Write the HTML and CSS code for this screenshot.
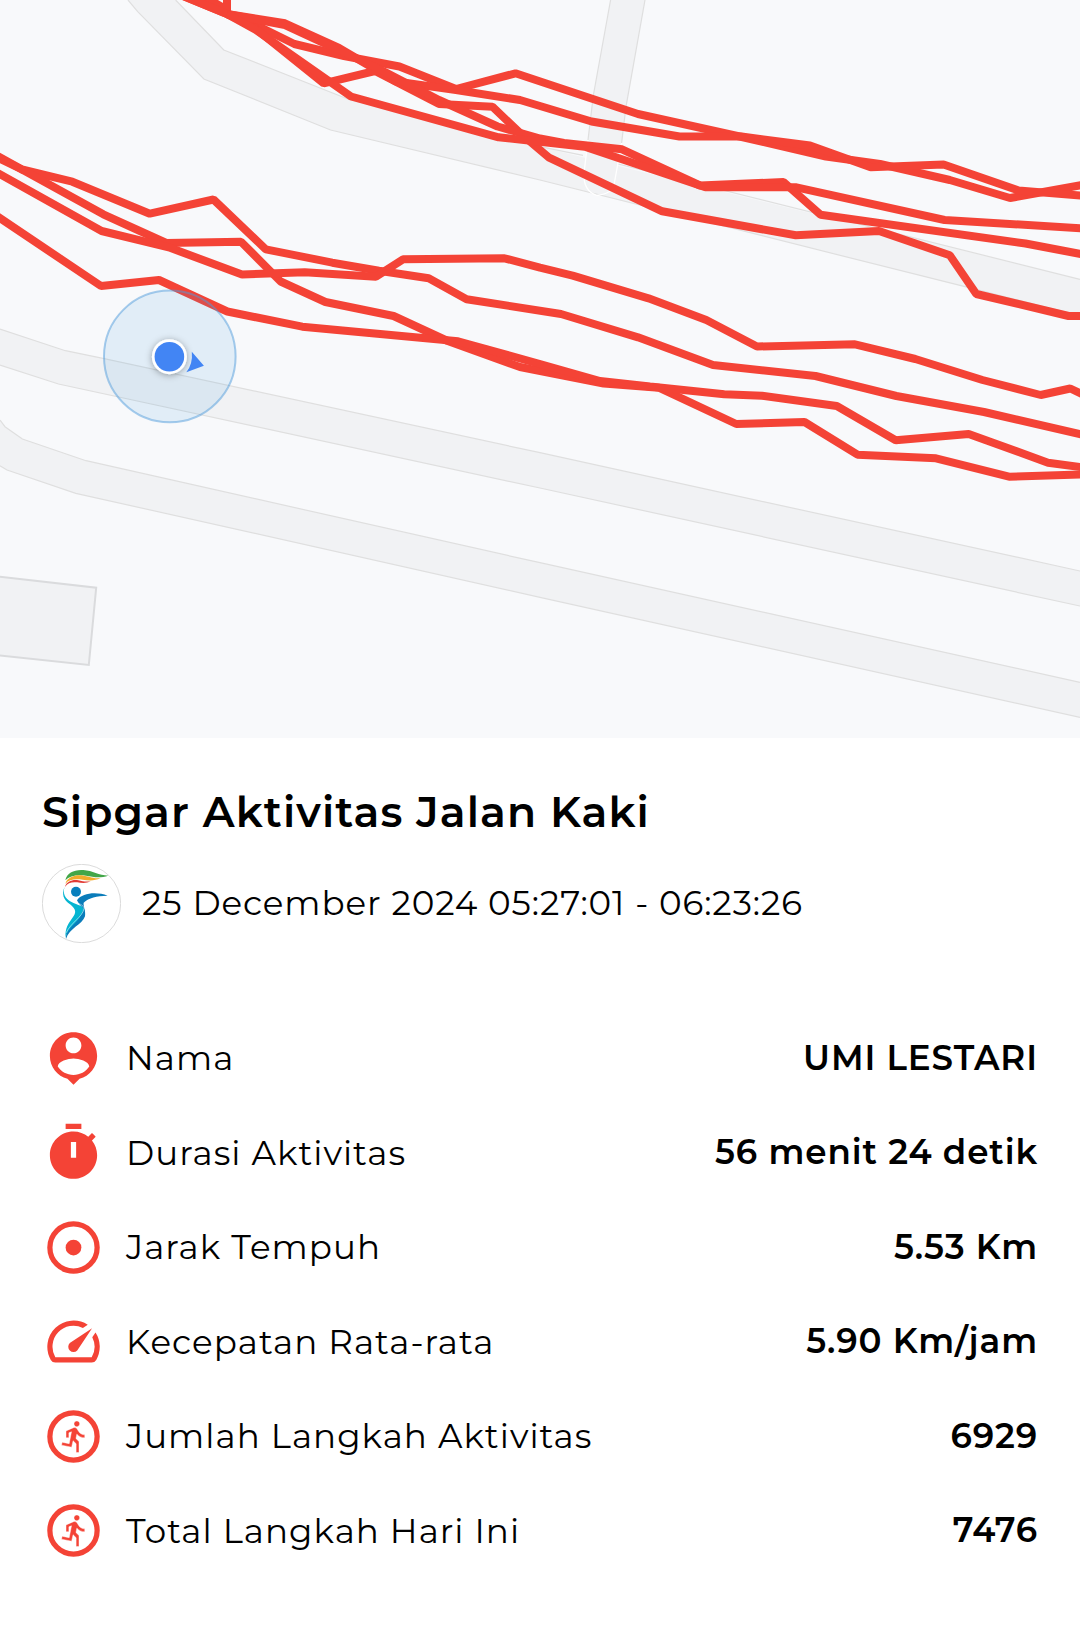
FILE: index.html
```html
<!DOCTYPE html>
<html lang="id">
<head>
<meta charset="utf-8">
<title>Sipgar Aktivitas Jalan Kaki</title>
<link rel="stylesheet" href="styles.css">
</head>
<body>
<main class="screen">
  <svg class="map" viewBox="0 0 1080 738" aria-label="Peta rute">
    <defs>
      <filter id="dot-shadow" x="-50%" y="-50%" width="200%" height="200%">
        <feDropShadow dx="0" dy="1" stdDeviation="3.5" flood-color="#000" flood-opacity=".35"/>
      </filter>
    </defs>
    <g class="road-fill">
      <path d="M175.6 0L223.8 50L347.8 99L540 146.7L1080 279.3V315.6L965 286.7L540 180L330.6 130L203.9 79L137.7 11.7L128 0Z"/>
      <path d="M610.6 0L593.4 95L588 140L584 173Q583 191 597 195.5Q613 193 614 185L621.6 143L626 106.7L645 0Z"/>
      <path d="M0 329L65.4 350.7L103 358.3L540 452.7L1080 571V606L540 488L58.5 384L0 365Z"/>
      <path d="M0 420L5 426.7L22.4 439L86 460.7L540 562.7L1080 682.3V717.3L540 597.3L75.8 493.3L7 470L0 465.7Z"/>
    </g>
    <g class="road-edge">
      <path d="M175.6 0L223.8 50L347.8 99L540 146.7L583 155.3M618 164L1080 279.3"/>
      <path d="M128 0L137.7 11.7L203.9 79L330.6 130L540 180L965 286.7L1080 315.6"/>
      <path d="M610.6 0L593.4 95L588 140M621.6 143L626 106.7L645 0"/>
      <path d="M0 329L65.4 350.7L103 358.3L540 452.7L1080 571M0 365L58.5 384L540 488L1080 606"/>
      <path d="M0 420L5 426.7L22.4 439L86 460.7L540 562.7L1080 682.3M0 465.7L7 470L75.8 493.3L540 597.3L1080 717.3"/>
    </g>
    <path class="road-cap" d="M588 140L584 173Q583 191 597 195.5Q613 193 614 185L621.6 143"/>
    <path class="building" d="M-4 576.3L96.2 587.7L88.8 665L-4 655Z"/>
    <g class="track">
      <path d="M178 -6L227 14M200 -6L227 10M227 -6V14"/>
      <path d="M181 -5L227 14L258 26L294.4 44L344 56L399.4 66.5L456 89L515.5 73.3L638 114L739.7 136.5L826 156.5L880 164L949.8 180L1010 198L1084 184.7"/>
      <path d="M227 14L285 23.3L339 48L396 81.5L456 90L520 100L591.6 121.5L679.5 136.5L741.5 136.5L810 145.5L870.6 167.3L943.6 164.5L1018.6 190.5L1084 195.8"/>
      <path d="M227 14L251 25L323.7 83.3L375 71L439 104L492.4 106.7L520 133L548.6 157.3L662.2 211.3L795.8 235.3L879 231L949.8 255.3L976.3 294L1068.6 316H1084"/>
      <path d="M227 14L285 25L339 50L385 72L439 100L497.6 126.5L540 138.5L564 143L622 149.3L700 185.5L783.5 182L820.6 214.7L1025.5 243.5L1084 254.7"/>
      <path d="M227 14L256 30L351 96.5L498.6 137.3L584.8 146.7L705.3 187.3H796.5L944.6 220L1084 228.5"/>
      <path d="M-4 155L22 169.5L72.3 181.7L149.8 213.7L213.5 199.5L265.8 249.3L332.3 262.7L379 270.7L428.7 278.3L466.6 299.3L561 314L638 337.3L713 365L815.5 376L896.4 396L984 412L1084 435"/>
      <path d="M-4 157L22 169.5L103.3 214.3L166.3 243L241 241.7L280.6 281.5L325.4 302L393.6 316L447.7 341L520 367L603.7 383.5L658.8 387.7L736.3 424L804.5 422L857.5 454.7L936 458.3L1009 476.7L1084 474.4"/>
      <path d="M-4 172L101.6 231L168.7 247.3L242 274.5L304.8 272.3L376 276.7L403 259.3L504.5 258.3L540 267.7L572.7 275.7L648.5 298.3L706.3 320L757 346.5L855 344.3L915.3 359L982.5 380L1040.7 395L1070.3 388.5L1084 395"/>
      <path d="M-4 215.5L101 286L159 280L227.3 311.5L302.3 326.7L458 341.3L540 364L600 381L650 386.5L724.2 394.3L762 395.7L836.8 406L895.7 440.3L968.7 434L1048 462.7L1084 467.5"/>
    </g>
    <circle class="accuracy" cx="169.8" cy="356.4" r="65.8"/>
    <circle class="location-ring" cx="169.4" cy="356.7" r="17.5" filter="url(#dot-shadow)"/>
    <circle class="location" cx="169.4" cy="356.7" r="14.8"/>
    <path class="location" d="M191.8 351.7L203.9 365.7L186.3 372.3Q193 364 191.8 351.7Z"/>
  </svg>

  <section class="details">
    <h1 class="title">Sipgar Aktivitas Jalan Kaki</h1>
    <div class="meta">
      <svg class="avatar" viewBox="36 282 237 237">
        <circle cx="154.500" cy="400.500" r="117.500" fill="#fff" stroke="#c8c8c8" stroke-width="2"/>
        <path fill="#43a648" d="M106 331C110 308 134 298 160 300C188 302 206 316 235 317C210 325 190 321 168 317C142 313 119 317 106 331Z"/>
        <path fill="#f2ac2c" d="M106 341C113 320 138 313 162 317C181 320 191 326 212 325C193 333 177 332 158 329C136 326 118 327 106 341Z"/>
        <path fill="#e23b34" d="M105 351C109 334 128 328 145 331C158 334 168 336 182 334C169 341 154 339 142 337C126 335 113 338 105 351Z"/>
        <path fill="#05b5d1" d="M104 350C97 371 106 385 123 395C143 407 166 405 164 425C160 455 112 470 107 503C104 475 116 460 127 444C140 427 138 418 122 404C98 388 95 371 104 350Z"/>
        <circle cx="138" cy="365" r="15" fill="#087fbd"/>
        <path fill="#0a7cba" d="M141 391C157 368 200 365 233 377C199 378 177 383 161 398C159 408 168 422 165 439C158 463 117 475 108 507C105 474 150 459 161 418C158 410 147 405 141 391Z"/>
        <path fill="none" stroke="#fff" stroke-width="1.500" d="M127 392C145 401 162 404 162 416C158 441 121 459 109 488"/>
      </svg>
      <time class="date">25 December 2024 05:27:01 - 06:23:26</time>
    </div>

    <dl class="stats">
      <div class="row">
        <svg class="icon" viewBox="0 0 24 24"><path d="M12 2c-4.970 0-9 4.030-9 9 0 4.170 2.840 7.670 6.690 8.690L12 22l2.310-2.310C18.160 18.670 21 15.170 21 11c0-4.970-4.030-9-9-9zm0 2c1.660 0 3 1.340 3 3s-1.340 3-3 3-3-1.340-3-3 1.340-3 3-3zm0 14.300c-2.500 0-4.710-1.280-6-3.220.03-1.990 4-3.080 6-3.080 1.990 0 5.970 1.090 6 3.080-1.290 1.940-3.500 3.220-6 3.220z"/></svg>
        <dt class="label">Nama</dt>
        <dd class="value">UMI LESTARI</dd>
      </div>
      <div class="row">
        <svg class="icon" viewBox="0 0 24 24"><path fill-rule="evenodd" d="M15 1H9v2h6V1zm4.030 6.390l1.420-1.420c-.43-.51-.9-.99-1.410-1.410l-1.420 1.420C16.070 4.740 14.120 4 12 4c-4.970 0-9 4.030-9 9s4.020 9 9 9 9-4.030 9-9c0-2.120-.74-4.070-1.970-5.610zM13 14h-2V8h2v6z"/></svg>
        <dt class="label">Durasi Aktivitas</dt>
        <dd class="value">56 menit 24 detik</dd>
      </div>
      <div class="row">
        <svg class="icon" viewBox="0 0 24 24"><circle class="ring" cx="12" cy="12" r="9"/><circle cx="12" cy="12" r="3"/></svg>
        <dt class="label">Jarak Tempuh</dt>
        <dd class="value">5.53 Km</dd>
      </div>
      <div class="row">
        <svg class="icon" viewBox="0 0 24 24"><path d="M20.380 8.570l-1.230 1.850a8 8 0 0 1-.22 7.580H5.070A8 8 0 0 1 15.580 6.850l1.850-1.230A10 10 0 0 0 3.350 19a2 2 0 0 0 1.720 1h13.850a2 2 0 0 0 1.740-1 10 10 0 0 0-.27-10.440zm-9.790 6.840a2 2 0 0 0 2.830 0l5.660-8.490-8.490 5.660a2 2 0 0 0 0 2.830z"/></svg>
        <dt class="label">Kecepatan Rata-rata</dt>
        <dd class="value">5.90 Km/jam</dd>
      </div>
      <div class="row">
        <svg class="icon" viewBox="0 0 24 24"><circle class="ring" cx="12" cy="12" r="9"/><path id="runner" class="runner" transform="translate(5.850 5.230) scale(.55 .56)" d="M13.490 5.480c1.100 0 2-.9 2-2s-.9-2-2-2-2 .9-2 2 .9 2 2 2zm-3.600 13.900l1-4.400 2.100 2v6h2v-7.500l-2.100-2 .6-3c1.300 1.500 3.300 2.500 5.500 2.500v-2c-1.900 0-3.500-1-4.300-2.400l-1-1.600c-.4-.6-1-1-1.700-1-.3 0-.5.1-.8.1l-5.200 2.200v4.700h2v-3.400l1.800-.7-1.600 8.100-4.900-1-.4 2 7 1.400z"/></svg>
        <dt class="label">Jumlah Langkah Aktivitas</dt>
        <dd class="value">6929</dd>
      </div>
      <div class="row">
        <svg class="icon" viewBox="0 0 24 24"><circle class="ring" cx="12" cy="12" r="9"/><use href="#runner"/></svg>
        <dt class="label">Total Langkah Hari Ini</dt>
        <dd class="value">7476</dd>
      </div>
    </dl>
  </section>
</main>
</body>
</html>
```
FILE: styles.css
```css
* { box-sizing: border-box; }

body {
  margin: 0;
  background: #fff;
  color: #000;
  font-family: Montserrat, Inter, "Liberation Sans", sans-serif;
}

.screen {
  display: flex;
  flex-direction: column;
  width: 1080px;
  height: 1648px;
  overflow: hidden;
}

.map {
  display: block;
  flex: none;
  width: 1080px;
  height: 738px;
  background: #f8f9fb;
}

.road-fill { fill: #f1f2f4; }
.road-edge { fill: none; stroke: #dfdfdf; stroke-width: 1.2; }
.road-cap { fill: none; stroke: #fff; stroke-width: 1.3; }
.building { fill: #f1f2f4; stroke: #dadbdd; stroke-width: 2; }
.track { fill: none; stroke: #f44336; stroke-width: 8; stroke-linejoin: bevel; }
.accuracy { fill: rgba(64, 160, 220, .12); stroke: rgba(80, 155, 220, .5); stroke-width: 2; }
.location-ring { fill: #fff; }
.location { fill: #4285f4; }

.details {
  display: flex;
  flex-direction: column;
  padding: 48px 42px 0;
}

.title {
  margin: 0;
  font-size: 42.5px;
  font-weight: 600;
  line-height: 52px;
  letter-spacing: 1.1px;
  white-space: nowrap;
}

.meta {
  display: flex;
  align-items: center;
  gap: 21px;
  margin-top: 26px;
}

.avatar { width: 79px; height: 79px; }

.date {
  padding-bottom: 2px;
  font-size: 34.125px;
  font-weight: 400;
  letter-spacing: .92px;
  white-space: nowrap;
}

.stats {
  display: flex;
  flex-direction: column;
  margin: 68px 0 0;
}

.row {
  display: flex;
  align-items: center;
  height: 94.5px;
}

.icon {
  flex: none;
  width: 63px;
  height: 63px;
  margin-right: 21px;
  fill: #f44336;
}

.ring { fill: none; stroke: #f44336; stroke-width: 2; }
.runner { stroke: #fff; stroke-width: .3; }

.label,
.value {
  font-size: 34.125px;
  line-height: 40px;
  white-space: nowrap;
}

.label {
  font-weight: 400;
  letter-spacing: 1.04px;
}

.value {
  margin: 0 0 0 auto;
  padding-bottom: 1px;
  font-weight: 600;
  letter-spacing: .91px;
}
```
